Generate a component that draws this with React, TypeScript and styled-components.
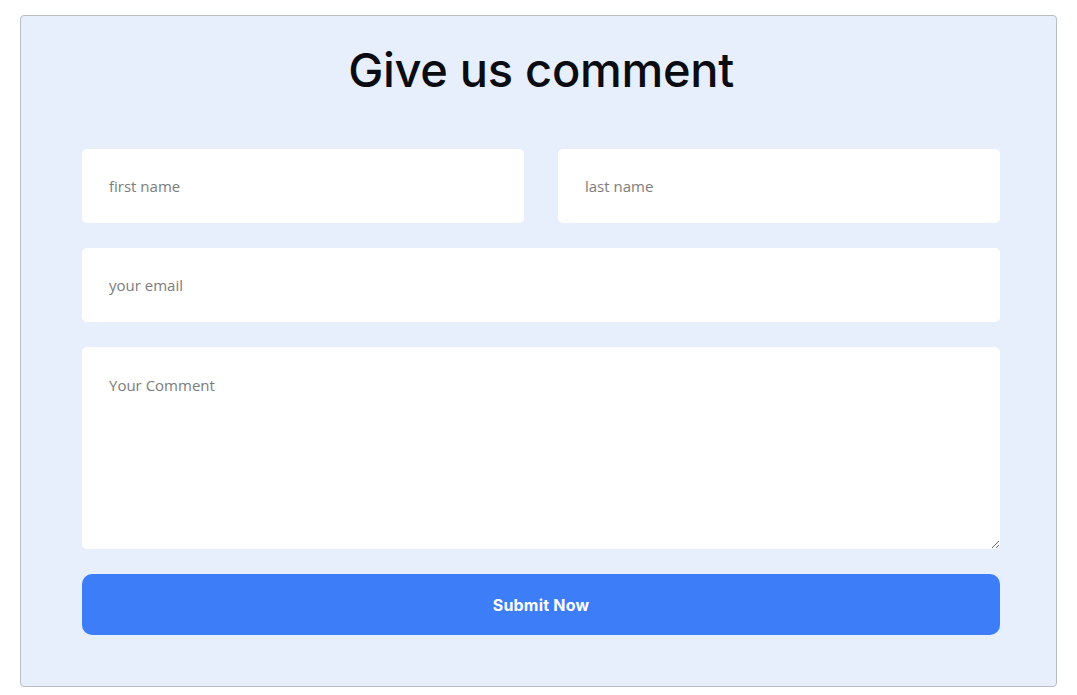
import React from 'react';
import styled, { createGlobalStyle } from 'styled-components';

const GlobalStyle = createGlobalStyle`
  body {
    margin: 0;
    background: #ffffff;
    font-family: 'Open Sans', 'Liberation Sans', sans-serif;
  }
  * {
    box-sizing: border-box;
  }
`;

const Page = styled.div`
  padding: 15px 20px 0 20px;
`;

const Card = styled.form`
  background: #e7effd;
  border: 1px solid #b9bcc2;
  border-radius: 4px;
  padding: 0 56px 51px 61px;
  display: flex;
  flex-direction: column;
  gap: 25px;
`;

const Title = styled.h2`
  margin: 26px 0 26px;
  text-align: center;
  font-family: 'Inter', 'Liberation Sans', sans-serif;
  font-weight: 500;
  font-size: 47px;
  line-height: 56px;
  letter-spacing: -0.3px;
  color: #0b0b12;
`;

const Row = styled.div`
  display: grid;
  grid-template-columns: 1fr 1fr;
  gap: 34px;
`;

const Field = styled.input`
  width: 100%;
  height: 74px;
  border: none;
  outline: none;
  border-radius: 5px;
  background: #ffffff;
  padding: 0 27px;
  font-family: 'Open Sans', 'Liberation Sans', sans-serif;
  font-size: 15px;
  color: #333;
  &::placeholder {
    color: #7c7c7c;
  }
`;

const CommentBox = styled.textarea`
  width: 100%;
  height: 202px;
  border: none;
  outline: none;
  border-radius: 5px;
  background: #ffffff;
  padding: 28px 27px;
  font-family: 'Open Sans', 'Liberation Sans', sans-serif;
  font-size: 15px;
  color: #333;
  display: block;
  &::placeholder {
    color: #7c7c7c;
  }
`;

const SubmitButton = styled.button`
  height: 61px;
  border: none;
  border-radius: 10px;
  background: #3d7ef8;
  color: #ffffff;
  font-family: 'Inter', 'Liberation Sans', sans-serif;
  font-weight: 700;
  font-size: 16px;
  letter-spacing: 0.2px;
  cursor: pointer;
`;

const App = () => {
  return (
    <>
      <GlobalStyle />
      <Page>
        <Card onSubmit={(e) => e.preventDefault()}>
          <Title>Give us comment</Title>
          <Row>
            <Field placeholder="first name" />
            <Field placeholder="last name" />
          </Row>
          <Field placeholder="your email" />
          <CommentBox placeholder="Your Comment" />
          <SubmitButton type="submit">Submit Now</SubmitButton>
        </Card>
      </Page>
    </>
  );
};

export default App;
